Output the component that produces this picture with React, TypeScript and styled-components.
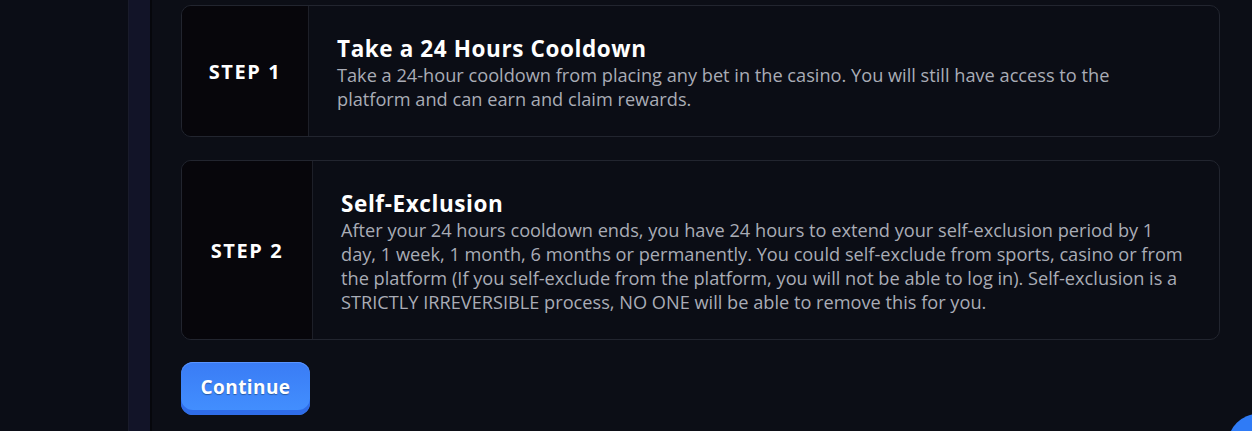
import React from "react";
import styled, { createGlobalStyle } from "styled-components";

const steps = [
  {
    label: "STEP 1",
    width: 126,
    title: "Take a 24 Hours Cooldown",
    text: "Take a 24-hour cooldown from placing any bet in the casino. You will still have access to the platform and can earn and claim rewards.",
  },
  {
    label: "STEP 2",
    width: 130,
    title: "Self-Exclusion",
    text: "After your 24 hours cooldown ends, you have 24 hours to extend your self-exclusion period by 1 day, 1 week, 1 month, 6 months or permanently. You could self-exclude from sports, casino or from the platform (If you self-exclude from the platform, you will not be able to log in). Self-exclusion is a STRICTLY IRREVERSIBLE process, NO ONE will be able to remove this for you.",
  },
];

const GlobalStyle = createGlobalStyle`
  html, body {
    margin: 0;
    padding: 0;
    background: #0b0d15;
    overflow: hidden;
  }
  body {
    font-family: "Open Sans", "Liberation Sans", sans-serif;
  }
`;

const App = () => {
  return (
    <>
      <GlobalStyle />
      <Page>
        <Sidebar />
        <SideRail />
        <Main>
          {steps.map((s) => (
            <Card key={s.label}>
              <StepCol $width={s.width}>{s.label}</StepCol>
              <Content>
                <Title>{s.title}</Title>
                <Body>{s.text}</Body>
              </Content>
            </Card>
          ))}
          <ContinueButton>Continue</ContinueButton>
        </Main>
        <ChatBubble />
      </Page>
    </>
  );
};

const Page = styled.div`
  display: flex;
  width: 1252px;
  height: 431px;
  overflow: hidden;
  position: relative;
  background: #0c0e16;
`;

const Sidebar = styled.div`
  width: 128px;
  flex-shrink: 0;
  background: #0b0d16;
`;

const SideRail = styled.div`
  width: 21px;
  flex-shrink: 0;
  background: #121428;
  border-left: 1px solid #191b2b;
  border-right: 2px solid #06070c;
`;

const Main = styled.div`
  flex: 1;
  padding: 5px 32px 0 29px;
  display: flex;
  flex-direction: column;
  align-items: flex-start;
  gap: 22px;
`;

const Card = styled.div`
  display: flex;
  align-self: stretch;
  border: 1px solid #22252f;
  border-radius: 10px;
  overflow: hidden;
  background: #0b0d15;

  & + & {
    margin-top: 1px;
  }
`;

const StepCol = styled.div<{ $width: number }>`
  width: ${(p) => p.$width}px;
  flex-shrink: 0;
  display: flex;
  align-items: center;
  justify-content: center;
  background: #07060b;
  border-right: 1px solid #1d1f28;
  color: #ffffff;
  font-weight: 700;
  font-size: 20px;
  letter-spacing: 1.6px;
`;

const Content = styled.div`
  flex: 1;
  padding: 29px 33px 25px 28px;
  display: flex;
  flex-direction: column;
`;

const Title = styled.div`
  color: #ffffff;
  font-weight: 700;
  font-size: 22.5px;
  letter-spacing: 0.6px;
  line-height: 28px;
`;

const Body = styled.div`
  color: #a9acb6;
  font-size: 18.2px;
  line-height: 24px;
`;

const ContinueButton = styled.button`
  width: 129px;
  height: 53px;
  border: none;
  border-radius: 12px;
  background: linear-gradient(180deg, #3a7cf5 0%, #4390ff 100%);
  box-shadow: inset 0 -5px 0 #2f6ce8, inset 0 1px 0 #5a94ff;
  color: #ffffff;
  font-family: "Open Sans", "Liberation Sans", sans-serif;
  font-weight: 700;
  font-size: 19px;
  letter-spacing: 0.4px;
  padding-bottom: 4px;
  text-shadow: 0 1px 1px rgba(0, 0, 0, 0.35);
  cursor: pointer;
`;

const ChatBubble = styled.div`
  position: absolute;
  left: 1228px;
  top: 414px;
  width: 60px;
  height: 60px;
  border-radius: 50%;
  background: #2f7bf6;
`;

export default App;
